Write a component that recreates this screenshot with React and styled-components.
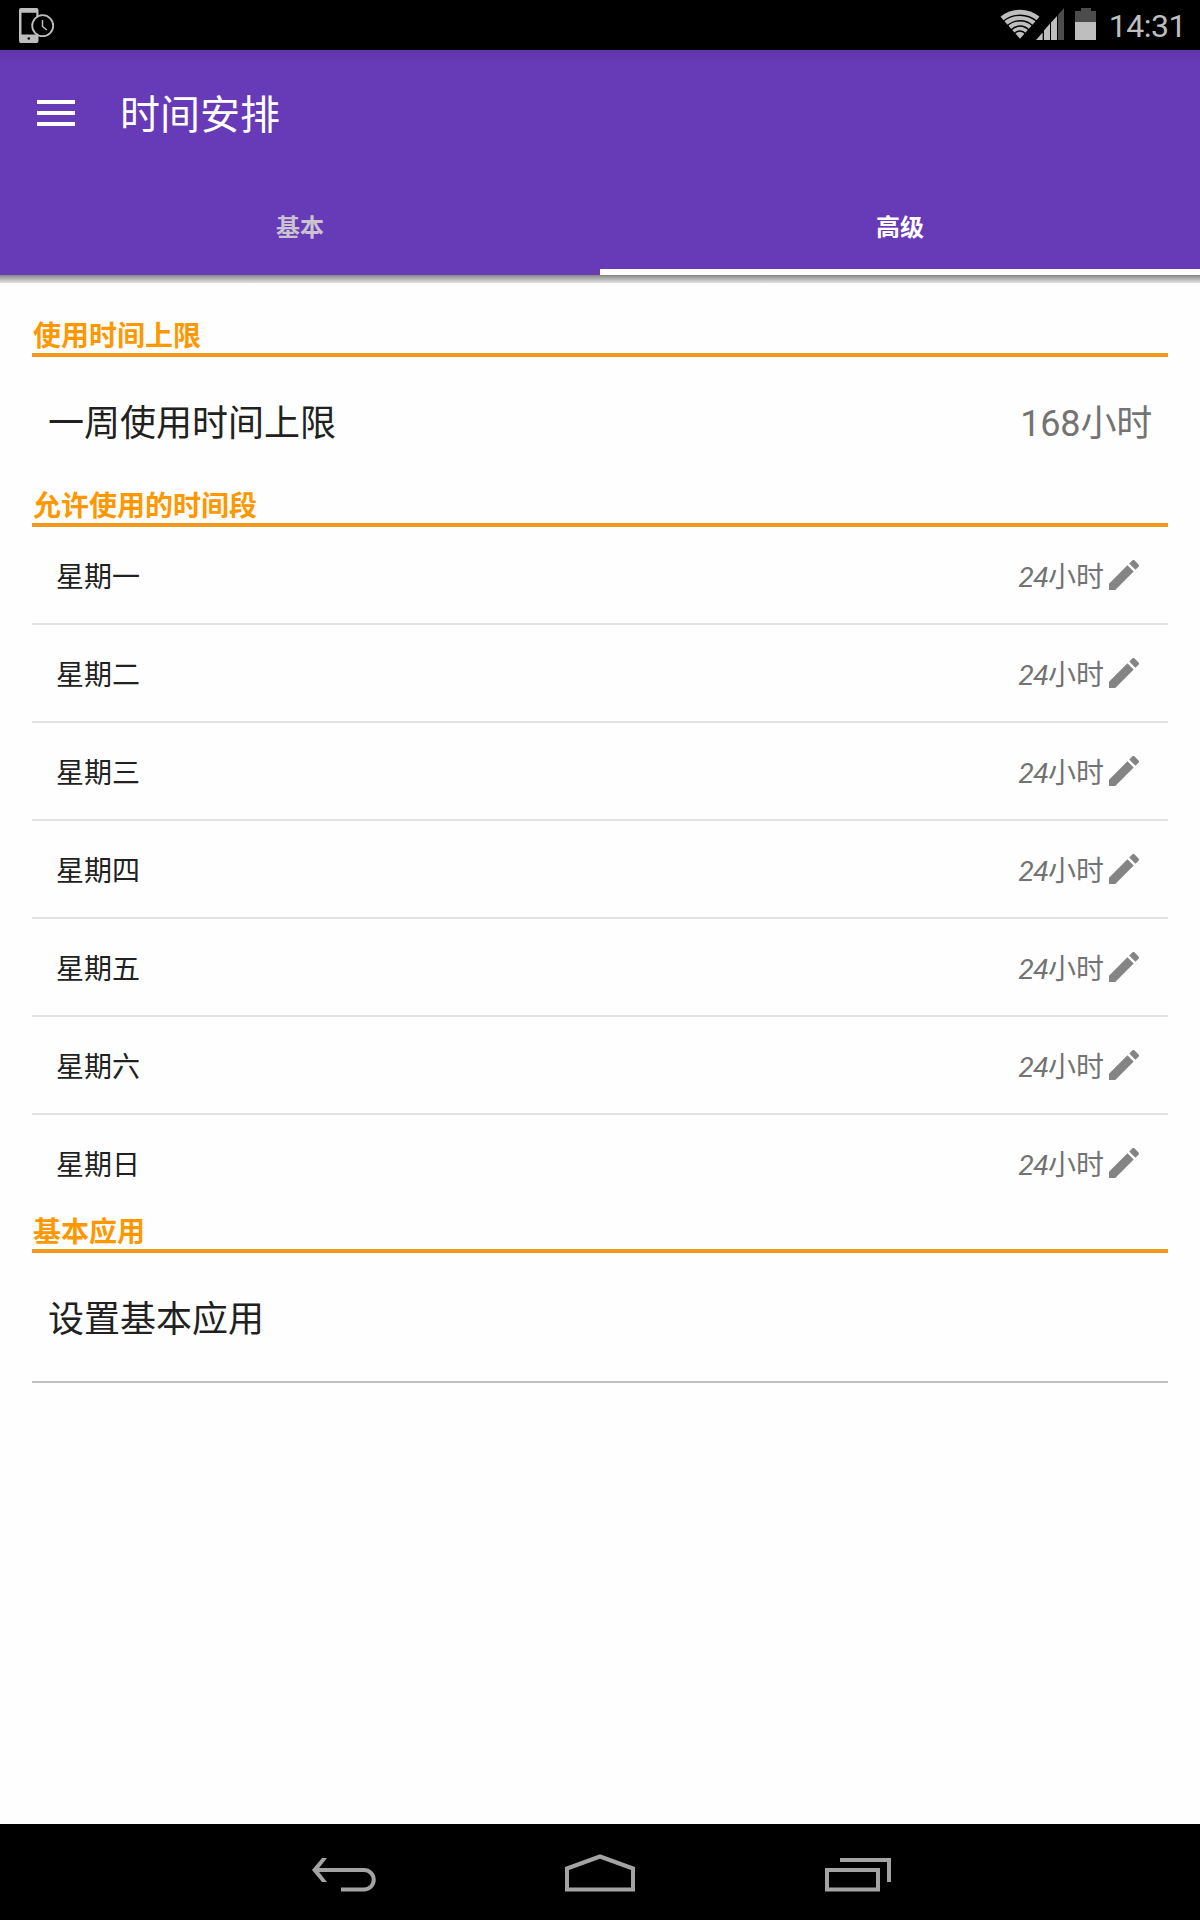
import React from 'react'
import styled, { createGlobalStyle } from 'styled-components'

const GlobalStyle = createGlobalStyle`
  * {
    box-sizing: border-box;
  }
  body {
    margin: 0;
    background-color: #fff;
    font-family: Roboto, 'Noto Sans CJK SC', sans-serif;
  }
`

const Screen = styled.div`
  display: flex;
  flex-direction: column;
  width: 1200px;
  height: 1920px;
  overflow: hidden;
  background-color: #fefefe;
`

const StatusBar = styled.div`
  display: flex;
  align-items: center;
  justify-content: space-between;
  flex: none;
  height: 50px;
  padding: 0 14px 0 18px;
  background-color: #000;
`

const StatusIcons = styled.div`
  display: flex;
  align-items: center;
`

const Clock = styled.span`
  margin-left: 13px;
  padding-top: 2px;
  color: #bebebe;
  font-size: 32px;
  letter-spacing: -0.5px;
  line-height: 48px;
`

const Header = styled.header`
  flex: none;
  height: 225px;
  color: #fff;
  background: linear-gradient(#5f35a8, #673ab7 12px);
`

const Toolbar = styled.div`
  display: flex;
  align-items: center;
  height: 128px;
  padding-left: 37px;
`

const MenuButton = styled.button`
  display: flex;
  flex-direction: column;
  justify-content: space-between;
  width: 38px;
  height: 26px;
  margin: 0 45px 2px 0;
  padding: 0;
  border: 0;
  background: none;
`

const MenuLine = styled.span`
  height: 4px;
  background-color: #fff;
`

const Title = styled.h1`
  margin: 0;
  padding-top: 4px;
  font-size: 40px;
  font-weight: 400;
  line-height: 48px;
`

const Tabs = styled.div`
  display: grid;
  grid-template-columns: 1fr 1fr;
  height: 97px;
`

const Tab = styled.div`
  display: flex;
  align-items: center;
  justify-content: center;
  padding-top: 4px;
  border-bottom: 6px solid ${({ $active }) => ($active ? '#fff' : 'transparent')};
  color: ${({ $active }) => ($active ? '#fff' : '#c8c3cf')};
  background-clip: padding-box;
  font-size: 24px;
  font-weight: 700;
`

const HeaderShadow = styled.div`
  flex: none;
  height: 8px;
  background: linear-gradient(#858585, #e4e4e4);
`

const Content = styled.main`
  flex: 1;
  padding: 32px 32px 0;
`

const SectionTitle = styled.h2`
  height: 42px;
  margin: 0;
  padding-left: 1px;
  border-bottom: 4px solid #f2991c;
  color: #ff9800;
  font-size: 28px;
  font-weight: 700;
  line-height: 43px;
`

const Item = styled.div`
  display: flex;
  align-items: center;
  justify-content: space-between;
  height: ${({ $divider }) => ($divider ? 130 : 128)}px;
  padding: 0 16px 2px;
  border-bottom: ${({ $divider }) => ($divider ? '2px solid #c0c0c0' : 'none')};
  color: #212121;
  font-size: 36px;
`

const ItemValue = styled.span`
  color: #737373;
  letter-spacing: -0.2px;
`

const DayRow = styled.div`
  display: flex;
  align-items: center;
  height: 98px;
  padding: 0 24px;
  border-bottom: 2px solid #e2e2e2;
  color: #212121;
  font-size: 28px;
  &:last-child {
    height: 96px;
    border-bottom: none;
  }
`

const DayName = styled.span`
  flex: 1;
  padding-bottom: 1px;
`

const Hours = styled.span`
  padding-bottom: 1px;
  color: #737373;
`

const Amount = styled.em`
  font-style: italic;
  letter-spacing: -0.5px;
`

const NavBar = styled.nav`
  display: flex;
  align-items: center;
  justify-content: center;
  gap: 170px;
  flex: none;
  height: 96px;
  background-color: #000;
`

const days = ['星期一', '星期二', '星期三', '星期四', '星期五', '星期六', '星期日']

function PhoneClockIcon () {
  return (
    <svg width='37' height='50' viewBox='18 0 37 50'>
      <path
        fill='#bebebe'
        fillRule='evenodd'
        d='M21 8h15.500a2 2 0 0 1 2 2v31a2 2 0 0 1-2 2H21a2 2 0 0 1-2-2V10a2 2 0 0 1 2-2zM21.500 12.800v21.800h14.800V12.800z'
      />
      <circle cx='28.800' cy='38.500' r='1.300' fill='#000' />
      <circle cx='42.700' cy='25.700' r='10.500' fill='#000' stroke='#bebebe' strokeWidth='1.800' />
      <path d='M42.500 20v6.500l4.300 3.500' fill='none' stroke='#bebebe' strokeWidth='1.500' />
    </svg>
  )
}

function WifiIcon () {
  return (
    <svg width='36' height='50' viewBox='1000 0 36 50' overflow='visible'>
      <path d='M1020 38.800L1000.500 16.800Q1009 9.800 1020 9.800T1039.500 16.800z' fill='#bebebe' />
      <g fill='none' stroke='#000' strokeWidth='1.400'>
        <path d='M1003 21.500Q1010.500 15.300 1020 15.300T1037 21.500' />
        <path d='M1007 26Q1012.500 20.800 1020 20.800T1033 26' />
        <path d='M1011 30Q1015 26 1020 26T1029 30' />
        <path d='M1014 34Q1017 31 1020 31T1026 34' />
      </g>
    </svg>
  )
}

function SignalIcon () {
  return (
    <svg width='28' height='50' viewBox='1036 0 28 50'>
      <path d='M1036 40h6.700v-7.500z' fill='#bebebe' />
      <path d='M1044 40h6V23.500l-6 7zM1051 40h6V16l-6 6.500z' fill='#bebebe' />
      <path d='M1058 40h6V8l-6 6.800z' fill='#4c4c4c' />
    </svg>
  )
}

function BatteryIcon () {
  return (
    <svg width='32' height='50' viewBox='1064 0 32 50'>
      <path d='M1075 22V11h6V8h10v3h5v11z' fill='#4c4c4c' />
      <path d='M1075 22h21v18h-21z' fill='#bebebe' />
    </svg>
  )
}

function PencilIcon () {
  return (
    <svg width='40' height='40' viewBox='0 0 24 24' fill='#848484'>
      <path d='M3 17.250V21h3.750L17.810 9.940l-3.750-3.750L3 17.250zM20.710 7.040c.39-.39.39-1.020 0-1.410l-2.340-2.340c-.39-.39-1.020-.39-1.410 0l-1.830 1.830 3.750 3.750 1.830-1.830z' />
    </svg>
  )
}

function BackIcon () {
  return (
    <svg width='90' height='96' viewBox='295 1824 90 96' fill='none' stroke='#a3a3a3' strokeWidth='4'>
      <path d='M316 1870H364a9.750 9.750 0 0 1 0 19.500H341' />
      <path d='M322 1858h5l-9.500 12 9.500 12h-5l-10-12z' fill='#a3a3a3' stroke='none' />
    </svg>
  )
}

function HomeIcon () {
  return (
    <svg width='90' height='96' viewBox='555 1824 90 96' fill='none' stroke='#a3a3a3' strokeWidth='4'>
      <path d='M567 1889.500V1868.500L600 1856.500L633 1868.500V1889.500z' />
    </svg>
  )
}

function RecentsIcon () {
  return (
    <svg width='90' height='96' viewBox='815 1824 90 96' fill='none' stroke='#a3a3a3' strokeWidth='4'>
      <path d='M827 1870h51v19.500h-51zM840 1860h49v22' />
    </svg>
  )
}

function App () {
  return (
    <>
      <GlobalStyle />
      <Screen>
        <StatusBar>
          <PhoneClockIcon />
          <StatusIcons>
            <WifiIcon />
            <SignalIcon />
            <BatteryIcon />
            <Clock>14:31</Clock>
          </StatusIcons>
        </StatusBar>
        <Header>
          <Toolbar>
            <MenuButton aria-label='menu'>
              <MenuLine />
              <MenuLine />
              <MenuLine />
            </MenuButton>
            <Title>时间安排</Title>
          </Toolbar>
          <Tabs>
            <Tab>基本</Tab>
            <Tab $active>高级</Tab>
          </Tabs>
        </Header>
        <HeaderShadow />
        <Content>
          <SectionTitle>使用时间上限</SectionTitle>
          <Item>
            <span>一周使用时间上限</span>
            <ItemValue>168小时</ItemValue>
          </Item>
          <SectionTitle>允许使用的时间段</SectionTitle>
          <div>
            {days.map(day => (
              <DayRow key={day}>
                <DayName>{day}</DayName>
                <Hours><Amount>24</Amount>小时</Hours>
                <PencilIcon />
              </DayRow>
            ))}
          </div>
          <SectionTitle>基本应用</SectionTitle>
          <Item $divider>
            <span>设置基本应用</span>
          </Item>
        </Content>
        <NavBar>
          <BackIcon />
          <HomeIcon />
          <RecentsIcon />
        </NavBar>
      </Screen>
    </>
  )
}

export default App
